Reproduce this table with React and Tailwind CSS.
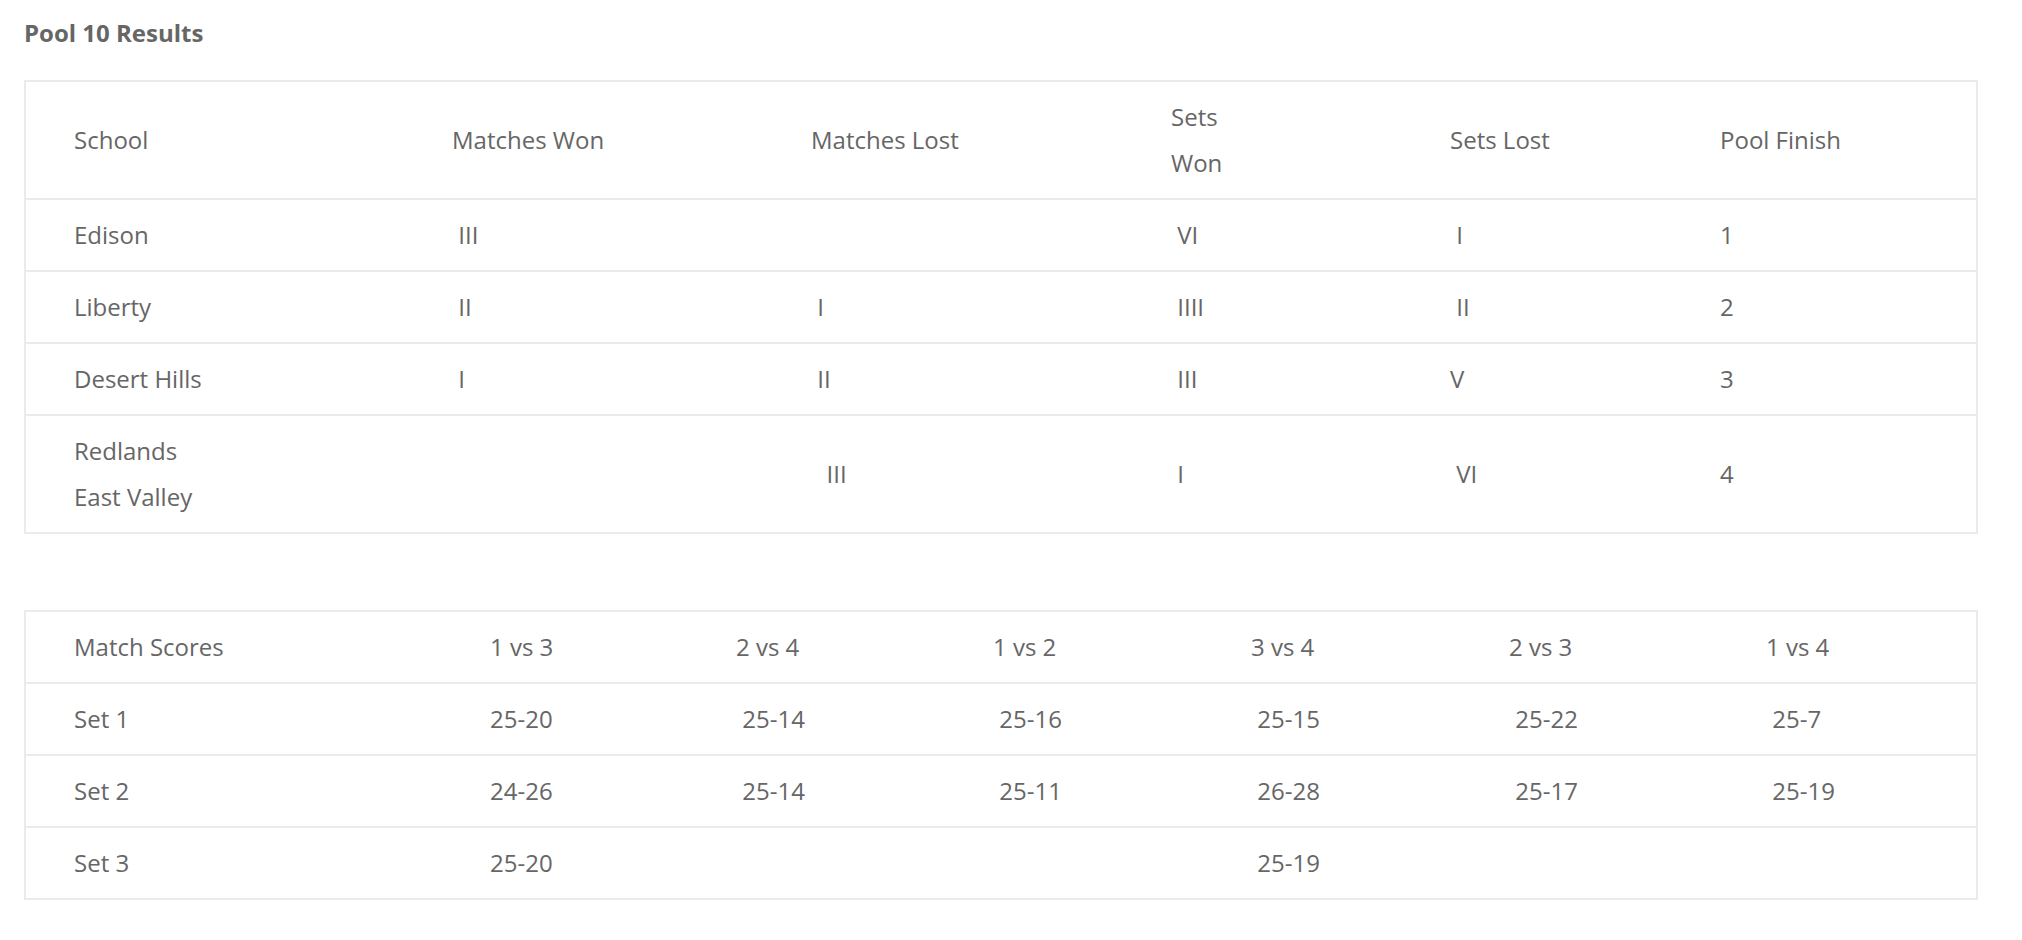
import React from "react";

// Pool standings, first table
const standingsCols = "grid-cols-[378px_359px_360px_279px_270px_1fr]";
const standings = [
  { school: ["Edison"], won: " III", lost: "", setsWon: " VI", setsLost: " I", finish: "1" },
  { school: ["Liberty"], won: " II", lost: " I", setsWon: " IIII", setsLost: " II", finish: "2" },
  { school: ["Desert Hills"], won: " I", lost: " II", setsWon: " III", setsLost: "V", finish: "3" },
  { school: ["Redlands", "East Valley"], won: "", lost: "  III", setsWon: " I", setsLost: " VI", finish: "4" },
];

// Match scores, second table
const scoreCols = "grid-cols-[416px_246px_257px_258px_258px_257px_1fr]";
const scoreHeader = ["Match Scores", "1 vs 3", "2 vs 4", "1 vs 2", "3 vs 4", "2 vs 3", "1 vs 4"];
const scores = [
  ["Set 1", "25-20", " 25-14", " 25-16", " 25-15", " 25-22", " 25-7"],
  ["Set 2", "24-26", " 25-14", " 25-11", " 26-28", " 25-17", " 25-19"],
  ["Set 3", "25-20", "", "", " 25-19", "", ""],
];

function Cell({ children, className = "" }) {
  return (
    <div className={`px-12 py-3 whitespace-pre leading-[46px] flex flex-col justify-center ${className}`}>
      {children}
    </div>
  );
}

export default function App() {
  return (
    <div className="min-h-screen bg-white pl-6 pr-[44px] pt-[17px] pb-10 text-[24px] text-[#666] font-['Open_Sans',sans-serif]">
      <h2 className="font-bold leading-[32px] text-[24px] text-[#666]">Pool 10 Results</h2>

      <div className="mt-[31px] border-2 border-[#ebebeb]">
        <div className={`grid ${standingsCols}`}>
          <Cell>School</Cell>
          <Cell>Matches Won</Cell>
          <Cell>Matches Lost</Cell>
          <Cell>
            <span>Sets</span>
            <span>Won</span>
          </Cell>
          <Cell>Sets Lost</Cell>
          <Cell>Pool Finish</Cell>
        </div>
        {standings.map((row) => (
          <div key={row.finish} className={`grid ${standingsCols} border-t-2 border-[#ebebeb]`}>
            <Cell>
              {row.school.map((s) => (
                <span key={s}>{s}</span>
              ))}
            </Cell>
            <Cell>{row.won}</Cell>
            <Cell className={row.finish === "4" ? "pl-[51px]" : ""}>{row.lost}</Cell>
            <Cell>{row.setsWon}</Cell>
            <Cell>{row.setsLost}</Cell>
            <Cell>{row.finish}</Cell>
          </div>
        ))}
      </div>

      <div className="mt-[76px] border-2 border-[#ebebeb]">
        <div className={`grid ${scoreCols}`}>
          {scoreHeader.map((h) => (
            <Cell key={h}>{h}</Cell>
          ))}
        </div>
        {scores.map((row) => (
          <div key={row[0]} className={`grid ${scoreCols} border-t-2 border-[#ebebeb]`}>
            {row.map((v, i) => (
              <Cell key={i}>{v}</Cell>
            ))}
          </div>
        ))}
      </div>
    </div>
  );
}
